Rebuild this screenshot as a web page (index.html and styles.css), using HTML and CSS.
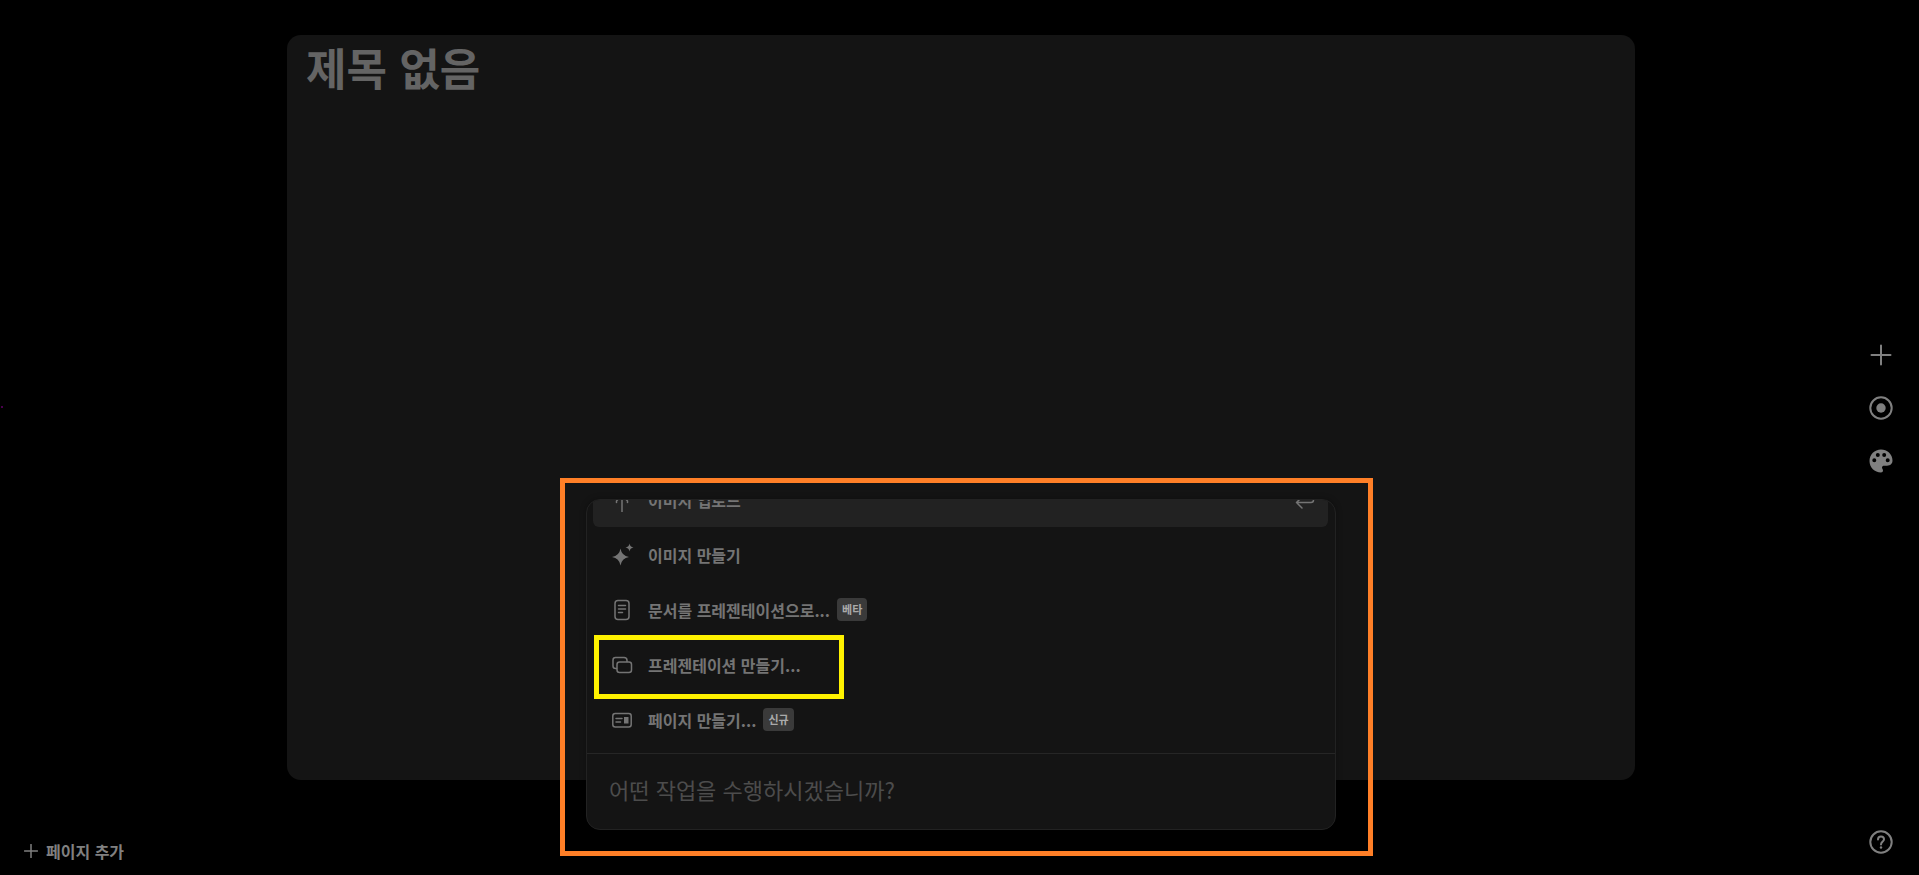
FILE: index.html
```
<!DOCTYPE html>
<html lang="ko">

<head>
	<meta charset="utf-8">
	<meta name="viewport" content="width=device-width, initial-scale=1">
	<title>제목 없음</title>
	<link rel="stylesheet" href="styles.css">
</head>

<body>
	<div class="workspace">
		<nav class="left-bar">
			<span class="dot"></span>
			<button class="add-page">
				<svg width="14" height="14" viewBox="0 0 14 14"><path d="M7 .5v13M.5 7h13" /></svg>
				페이지 추가
			</button>
		</nav>

		<main class="stage">
			<article class="canvas">
				<h1 class="page-title">제목 없음</h1>
			</article>

			<section class="command">
				<div class="command-list-wrap">
					<ul class="command-list">
						<li>
							<button class="command-item selected">
								<svg class="icon" viewBox="0 0 24 24"><path d="M12 24V6M6.500 14.500V13L12 7l5.500 6v1.500" /></svg>
								<span>이미지 업로드</span>
								<svg class="icon enter" viewBox="0 0 24 24"><path d="M10 9l-5.500 5.500L10 20M4.500 14.500H19q2.500 0 2.500-2.500V6" /></svg>
							</button>
						</li>
						<li>
							<button class="command-item">
								<svg class="icon" viewBox="0 0 24 24"><path class="solid" d="M10.500 5.500Q11.700 12.800 19 14 11.700 15.200 10.500 22.500 9.300 15.200 2 14 9.300 12.800 10.500 5.500ZM19.500 .5Q20 4 23.500 4.500 20 5 19.500 8.500 19 5 15.500 4.500 19 4 19.500 .5Z" /></svg>
								<span>이미지 만들기</span>
							</button>
						</li>
						<li>
							<button class="command-item">
								<svg class="icon" viewBox="0 0 24 24"><rect x="5" y="2.500" width="14" height="19" rx="3" /><path d="M8.500 7.500h7M8.500 11h7M8.500 14.500h4" /></svg>
								<span>문서를 프레젠테이션으로...</span>
								<span class="badge">베타</span>
							</button>
						</li>
						<li>
							<button class="command-item">
								<svg class="icon" viewBox="0 0 24 24"><rect x="7" y="9" width="14.500" height="10.500" rx="2.500" /><path d="M6.500 15.500H5.500Q3 15.500 3 13V7Q3 4.500 5.500 4.500H14Q17 4.500 17 7.500V8.500" /></svg>
								<span>프레젠테이션 만들기...</span>
							</button>
							<div class="mark mark-item"></div>
						</li>
						<li>
							<button class="command-item">
								<svg class="icon" viewBox="0 0 24 24"><rect x="2.800" y="5.500" width="18.400" height="13.500" rx="2.500" /><path d="M6 10.500h6M6 14h4.500" /><path class="solid" d="M14 9h4.500v6.500H14z" /></svg>
								<span>페이지 만들기...</span>
								<span class="badge">신규</span>
							</button>
						</li>
					</ul>
				</div>
				<input class="command-input" type="text" aria-label="작업 입력" placeholder="어떤 작업을 수행하시겠습니까?">
				<div class="mark mark-panel"></div>
			</section>
		</main>

		<aside class="right-bar">
			<div class="tools">
				<button class="tool" aria-label="추가">
					<svg viewBox="0 0 24 24"><path d="M12 2.500v19M2.500 12h19" /></svg>
				</button>
				<button class="tool" aria-label="녹화">
					<svg viewBox="0 0 24 24"><circle cx="12" cy="12" r="10.700" /><circle class="solid" cx="12" cy="12" r="4.700" /></svg>
				</button>
				<button class="tool" aria-label="테마">
					<svg viewBox="0 0 24 24"><path class="solid" fill-rule="evenodd" d="M12 .5C5.600 .5 .5 5.600 .5 12S5.600 23.500 12 23.500c1.200 0 2-.9 2-2 0-1.300-1-1.700-1-3 0-1.200 1-1.800 2.200-1.800H18c3.300 0 5.500-2 5.500-5.200C23.500 5 18 .5 12 .5ZM5.300 9.300a2 2 0 1 1 0 4 2 2 0 0 1 0-4ZM8.800 4a2 2 0 1 1 0 4 2 2 0 0 1 0-4ZM15.200 4a2 2 0 1 1 0 4 2 2 0 0 1 0-4ZM18.700 9.300a2 2 0 1 1 0 4 2 2 0 0 1 0-4Z" /></svg>
				</button>
			</div>
			<button class="tool" aria-label="도움말">
				<svg viewBox="0 0 24 24"><circle cx="12" cy="12" r="10.700" /><path d="M9 9.500C9 7.500 10.200 6.500 12 6.500S15 7.600 15 9.300C15 11.500 12 11.500 12 14.500" /><circle class="solid" cx="12" cy="17.500" r="1.200" /></svg>
			</button>
		</aside>
	</div>
</body>

</html>
```

FILE: styles.css
```
* {
	box-sizing: border-box;
}

body {
	margin: 0;
	background: #000;
	color: #747474;
	font-family: "Noto Sans CJK KR", "Noto Sans", sans-serif;
	font-size: 16px;
	overflow: hidden;
}

button {
	padding: 0;
	border: none;
	background: none;
	color: inherit;
	font: inherit;
	cursor: pointer;
}

svg {
	display: block;
	fill: none;
	stroke: currentColor;
	stroke-width: 1.500;
	stroke-linecap: round;
	stroke-linejoin: round;
}

.solid {
	fill: currentColor;
	stroke: none;
}

.workspace {
	display: grid;
	grid-template-columns: 287px 1fr 284px;
	height: 100vh;
}

/* left side */
.left-bar {
	display: flex;
	flex-direction: column;
	justify-content: flex-end;
	align-items: flex-start;
	position: relative;
	padding: 0 24px 12px;
}

.dot {
	position: absolute;
	left: 1px;
	top: 406px;
	width: 2px;
	height: 2px;
	background: #4a004e;
}

.add-page {
	display: flex;
	align-items: center;
	gap: 8px;
	color: #808080;
	font-weight: 600;
}

/* canvas */
.stage {
	position: relative;
	padding: 35px 0 95px;
}

.canvas {
	height: 100%;
	padding: 2px 19px;
	border-radius: 14px;
	background: #141414;
}

.page-title {
	margin: 0;
	color: #646464;
	font-size: 44px;
	font-weight: 700;
	line-height: 60px;
}

/* command menu */
.command {
	position: absolute;
	left: 50%;
	bottom: 45px;
	width: 750px;
	transform: translateX(-50%);
	border: 1px solid #222;
	border-radius: 14px;
	background: #141414;
	box-shadow: 0 0 6px rgba(0, 0, 0, 0.3);
}

.command-list-wrap {
	display: flex;
	flex-direction: column;
	justify-content: flex-end;
	height: 254px;
	overflow: hidden;
	border-bottom: 1px solid #262626;
	border-radius: 13px 13px 0 0;
}

.command-list {
	margin: 0;
	padding: 0 7px 6px 6px;
	list-style: none;
}

.command-list li {
	position: relative;
}

.command-item {
	display: flex;
	align-items: center;
	width: 100%;
	height: 55px;
	padding: 0 12px 0 17px;
	border-radius: 6px;
	font-weight: 600;
	text-align: left;
}

.command-item.selected {
	background: #222;
}

.icon {
	width: 24px;
	height: 24px;
	margin-right: 14px;
}

.icon.enter {
	margin: 0 0 0 auto;
}

.badge {
	margin-left: 7px;
	padding: 0 5px;
	border-radius: 4px;
	background: #3a3a3a;
	color: #aaa;
	font-size: 11px;
	font-weight: 700;
	line-height: 23px;
}

.command-input {
	display: block;
	width: 100%;
	height: 75px;
	padding: 0 22px 5px;
	border: none;
	outline: none;
	background: none;
	color: #aaa;
	font-family: inherit;
	font-size: 22px;
}

.command-input::placeholder {
	color: #4c4c4c;
	opacity: 1;
}

/* highlight frames */
.mark {
	position: absolute;
	z-index: 1;
	border: 5px solid;
	pointer-events: none;
}

.mark-item {
	top: -2px;
	bottom: -7px;
	left: 1px;
	width: 250px;
	border-color: #fff200;
}

.mark-panel {
	inset: -22px -38px -27px -27px;
	border-color: #ff7f27;
}

/* right side */
.right-bar {
	display: flex;
	flex-direction: column;
	align-items: flex-end;
	padding: 0 12px 7px;
}

.tools {
	display: flex;
	flex: 1;
	flex-direction: column;
	justify-content: center;
}

.tool {
	display: grid;
	place-items: center;
	width: 53px;
	height: 53px;
	color: #808080;
}

.tool svg {
	width: 24px;
	height: 24px;
	stroke-width: 2;
}
```
